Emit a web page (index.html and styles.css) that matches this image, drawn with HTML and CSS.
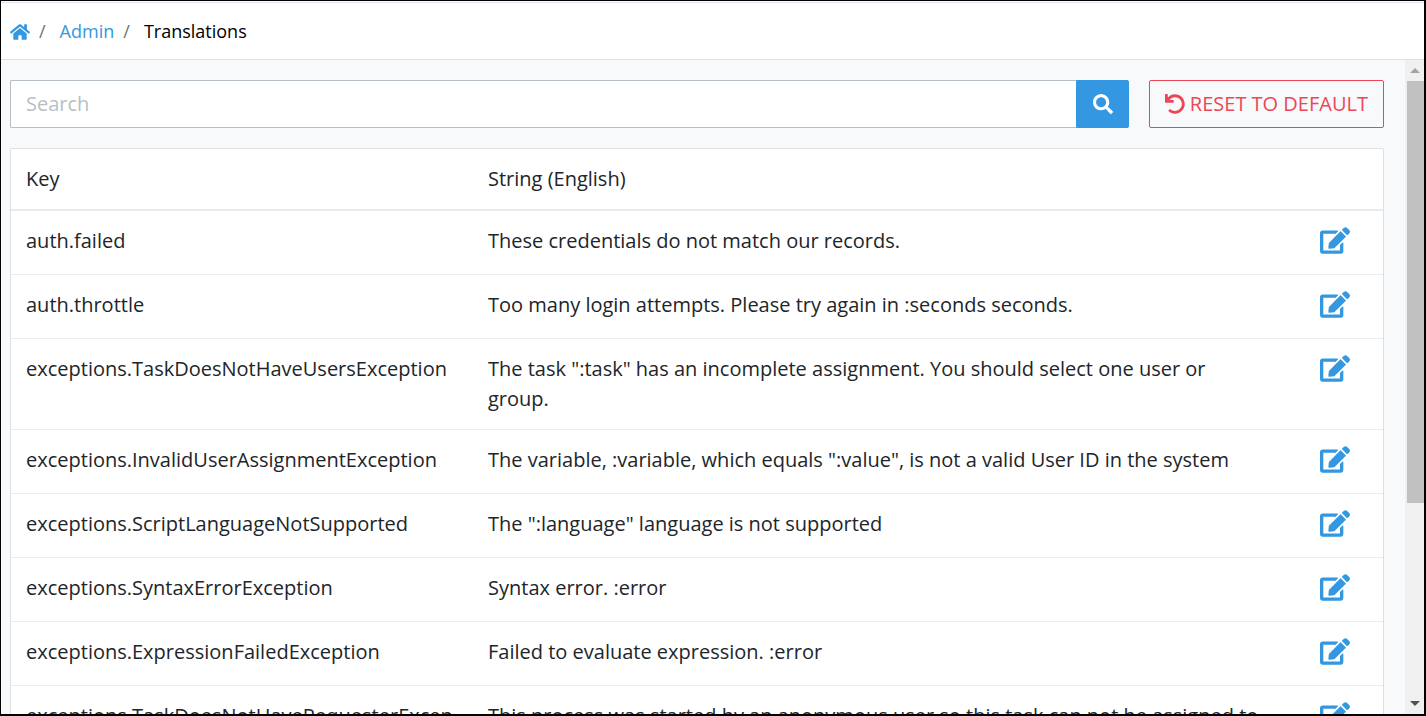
FILE: index.html
```html
<!DOCTYPE html>
<html lang="en">

<head>
    <meta charset="UTF-8">
    <meta name="viewport" content="width=device-width, initial-scale=1.0">
    <title>Translations</title>
    <link rel="stylesheet" href="styles.css">
</head>

<body>
    <!-- shared icons -->
    <svg class="sprite" aria-hidden="true">
        <symbol id="icon-home" viewBox="0 0 576 512">
            <path d="M280.37 148.26L96 300.11V464a16 16 0 0 0 16 16l112.06-.29a16 16 0 0 0 15.92-16V368a16 16 0 0 1 16-16h64a16 16 0 0 1 16 16v95.64a16 16 0 0 0 16 16.05L464 480a16 16 0 0 0 16-16V300L295.67 148.26a12.19 12.19 0 0 0-15.3 0zM571.6 251.47L488 182.56V44.05a12 12 0 0 0-12-12h-56a12 12 0 0 0-12 12v72.61L318.47 43a48 48 0 0 0-61 0L4.34 251.47a12 12 0 0 0-1.6 16.9l25.5 31A12 12 0 0 0 45.15 301l235.22-193.74a12.19 12.19 0 0 1 15.3 0L530.9 301a12 12 0 0 0 16.9-1.6l25.5-31a12 12 0 0 0-1.7-16.93z"/>
        </symbol>
        <symbol id="icon-search" viewBox="0 0 512 512">
            <path d="M505 442.7L405.3 343c-4.5-4.5-10.6-7-17-7H372c27.6-35.3 44-79.7 44-128C416 93.1 322.9 0 208 0S0 93.1 0 208s93.1 208 208 208c48.3 0 92.7-16.4 128-44v16.3c0 6.4 2.5 12.5 7 17l99.7 99.7c9.4 9.4 24.6 9.4 33.9 0l28.3-28.3c9.4-9.4 9.4-24.6.1-34zM208 336c-70.7 0-128-57.2-128-128 0-70.7 57.2-128 128-128 70.7 0 128 57.2 128 128 0 70.7-57.2 128-128 128z"/>
        </symbol>
        <symbol id="icon-undo" viewBox="0 0 512 512">
            <path d="M212.333 224.333H12c-6.627 0-12-5.373-12-12V12C0 5.373 5.373 0 12 0h48c6.627 0 12 5.373 12 12v78.112C117.773 39.279 184.26 7.47 258.175 8.007c136.906.994 246.448 111.623 246.157 248.532C504.041 393.258 393.12 504 256.333 504c-64.089 0-122.496-24.313-166.51-64.215-5.099-4.622-5.334-12.554-.467-17.42l33.967-33.967c4.474-4.474 11.662-4.717 16.401-.525C170.76 415.336 211.58 432 256.333 432c97.268 0 176-78.716 176-176 0-97.267-78.716-176-176-176-58.496 0-110.28 28.476-142.274 72.333h98.274c6.627 0 12 5.373 12 12v48c0 6.627-5.373 12-12 12z"/>
        </symbol>
        <symbol id="icon-edit" viewBox="0 0 576 512">
            <path d="M402.6 83.2l90.2 90.2c3.8 3.8 3.8 10 0 13.8L274.4 405.6l-92.8 10.3c-12.4 1.4-22.9-9.1-21.5-21.5l10.3-92.8L388.8 83.2c3.8-3.8 10-3.8 13.8 0zm162-22.9l-48.8-48.8c-15.2-15.2-39.9-15.2-55.2 0l-35.4 35.4c-3.8 3.8-3.8 10 0 13.8l90.2 90.2c3.8 3.8 10 3.8 13.8 0l35.4-35.4c15.2-15.3 15.2-40 0-55.2zM384 346.2V448H64V128h229.8c3.2 0 6.2-1.3 8.5-3.5l40-40c7.6-7.6 2-20.5-8.5-20.5H48C21.5 64 0 85.5 0 112v352c0 26.5 21.5 48 48 48h352c26.5 0 48-21.5 48-48V306.2c0-10.7-12.9-16-20.5-8.5l-40 40c-2.2 2.3-3.5 5.3-3.5 8.5z"/>
        </symbol>
    </svg>

    <div class="page">
        <nav class="topbar" aria-label="Breadcrumb">
            <ol class="breadcrumb">
                <li><a href="#" aria-label="Home"><svg class="icon-home"><use href="#icon-home"/></svg></a></li>
                <li><a href="#">Admin</a></li>
                <li class="active">Translations</li>
            </ol>
        </nav>

        <div class="main">
            <main class="content">
                <div class="toolbar">
                    <form class="search">
                        <input class="search-input" type="search" placeholder="Search" aria-label="Search">
                        <button class="search-button" type="button" aria-label="Search">
                            <svg class="icon"><use href="#icon-search"/></svg>
                        </button>
                    </form>
                    <button class="reset-button" type="button">
                        <svg class="icon"><use href="#icon-undo"/></svg>
                        Reset to Default
                    </button>
                </div>

                <div class="card">
                    <table class="translations">
                        <thead>
                            <tr>
                                <th class="col-key">Key</th>
                                <th>String (English)</th>
                                <th class="col-action"></th>
                            </tr>
                        </thead>
                        <tbody>
                            <tr>
                                <td>auth.failed</td>
                                <td>These credentials do not match our records.</td>
                                <td class="action"><button class="edit-button" type="button" aria-label="Edit"><svg class="icon-edit"><use href="#icon-edit"/></svg></button></td>
                            </tr>
                            <tr>
                                <td>auth.throttle</td>
                                <td>Too many login attempts. Please try again in :seconds seconds.</td>
                                <td class="action"><button class="edit-button" type="button" aria-label="Edit"><svg class="icon-edit"><use href="#icon-edit"/></svg></button></td>
                            </tr>
                            <tr>
                                <td>exceptions.TaskDoesNotHaveUsersException</td>
                                <td>The task ":task" has an incomplete assignment. You should select one user or group.</td>
                                <td class="action"><button class="edit-button" type="button" aria-label="Edit"><svg class="icon-edit"><use href="#icon-edit"/></svg></button></td>
                            </tr>
                            <tr>
                                <td>exceptions.InvalidUserAssignmentException</td>
                                <td>The variable, :variable, which equals ":value", is not a valid User ID in the system</td>
                                <td class="action"><button class="edit-button" type="button" aria-label="Edit"><svg class="icon-edit"><use href="#icon-edit"/></svg></button></td>
                            </tr>
                            <tr>
                                <td>exceptions.ScriptLanguageNotSupported</td>
                                <td>The ":language" language is not supported</td>
                                <td class="action"><button class="edit-button" type="button" aria-label="Edit"><svg class="icon-edit"><use href="#icon-edit"/></svg></button></td>
                            </tr>
                            <tr>
                                <td>exceptions.SyntaxErrorException</td>
                                <td>Syntax error. :error</td>
                                <td class="action"><button class="edit-button" type="button" aria-label="Edit"><svg class="icon-edit"><use href="#icon-edit"/></svg></button></td>
                            </tr>
                            <tr>
                                <td>exceptions.ExpressionFailedException</td>
                                <td>Failed to evaluate expression. :error</td>
                                <td class="action"><button class="edit-button" type="button" aria-label="Edit"><svg class="icon-edit"><use href="#icon-edit"/></svg></button></td>
                            </tr>
                            <tr>
                                <td>exceptions.TaskDoesNotHaveRequesterException</td>
                                <td>This process was started by an anonymous user so this task can not be assigned to the requester</td>
                                <td class="action"><button class="edit-button" type="button" aria-label="Edit"><svg class="icon-edit"><use href="#icon-edit"/></svg></button></td>
                            </tr>
                        </tbody>
                    </table>
                </div>
            </main>

            <div class="scrollbar" aria-hidden="true">
                <span class="arrow arrow-up"></span>
                <div class="track"><div class="thumb"></div></div>
                <span class="arrow arrow-down"></span>
            </div>
        </div>
    </div>
</body>

</html>
```
FILE: styles.css
```css
* {
    box-sizing: border-box;
}

body {
    margin: 0;
    font-family: 'Open Sans', sans-serif;
    font-size: 20px;
    line-height: 30px;
    color: #212529;
}

svg {
    display: block;
    fill: currentColor;
}

a {
    color: #3397e1;
    text-decoration: none;
}

button {
    font: inherit;
    cursor: pointer;
}

.sprite {
    display: none;
}

.page {
    display: flex;
    flex-direction: column;
    height: 100vh;
    overflow: hidden;
    border: solid #000;
    border-width: 1px 2px 2px 1px;
    background-color: #f7f9fb;
}

/* Breadcrumb bar */
.topbar {
    flex: none;
    padding: 15px 9px 13px;
    background-color: #fff;
    border-top: 1px solid #fff;
    border-bottom: 1px solid #dee2e6;
    box-shadow: inset 0 1px #e4e1ec;
}

.breadcrumb {
    display: flex;
    align-items: center;
    margin: 0;
    padding: 0;
    list-style: none;
    font-size: 18px;
    line-height: 29px;
}

.breadcrumb li {
    display: flex;
    align-items: center;
}

.breadcrumb li + li::before {
    content: "/";
    padding: 0 14px 0 9px;
    color: #6c757d;
}

.breadcrumb .active {
    color: #000;
}

.icon-home {
    width: 20px;
    height: 18px;
}

.icon {
    width: 20px;
    height: 20px;
}

.main {
    display: flex;
    flex: 1;
    min-height: 0;
}

.content {
    flex: 1;
    min-width: 0;
    overflow: hidden;
    padding: 20px 21px 0 9px;
}

/* Search and reset */
.toolbar {
    display: flex;
    gap: 20px;
    margin-bottom: 20px;
}

.search {
    display: flex;
    flex: 1;
}

.search-input {
    flex: 1;
    min-width: 0;
    height: 48px;
    padding: 0 15px 2px;
    border: 1px solid #b6bfc6;
    border-right: none;
    border-radius: 2px 0 0 2px;
    background-color: #fff;
    font: inherit;
    appearance: none;
}

.search-input::placeholder {
    color: #b6bfc6;
}

.search-button {
    padding: 0 16px;
    width: 53px;
    border: 1px solid #3397e1;
    border-radius: 0 2px 2px 0;
    background-color: #3397e1;
    color: #fff;
}

.reset-button {
    display: flex;
    align-items: center;
    gap: 5px;
    padding: 0 15px;
    border: 1px solid #ed4757;
    border-radius: 2px;
    background-color: transparent;
    color: #ed4757;
    text-transform: uppercase;
}

/* Translations table */
.card {
    background-color: #fff;
    border: 1px solid #dee0e2;
    border-radius: 2px;
}

.translations {
    width: 100%;
    table-layout: fixed;
    border-collapse: separate;
    border-spacing: 0;
}

.translations th,
.translations td {
    padding: 15px;
    text-align: left;
    vertical-align: top;
    font-weight: 400;
    overflow-wrap: break-word;
}

.translations th {
    border-bottom: 2px solid #e9ecef;
}

.translations td {
    border-bottom: 1px solid #e9ecef;
}

.translations .col-key {
    width: 462px;
}

.translations .col-action {
    width: 106px;
}

.translations .action {
    padding: 15px 15px 15px 0;
}

.edit-button {
    display: block;
    margin-left: auto;
    padding: 1px 18px 5px;
    border: none;
    background: none;
    color: #3397e1;
}

.icon-edit {
    width: 30px;
    height: 27px;
}

/* Scrollbar */
.scrollbar {
    display: flex;
    flex-direction: column;
    width: 19px;
    background-color: #f0f0f0;
}

.arrow {
    height: 21px;
    display: flex;
    align-items: center;
    justify-content: center;
}

.arrow::before {
    content: "";
    border: 5px solid transparent;
}

.arrow-up::before {
    border-top: none;
    border-bottom-color: #a3a3a3;
}

.arrow-down::before {
    border-bottom: none;
    border-top-color: #505050;
}

.track {
    flex: 1;
    padding-left: 2px;
}

.thumb {
    height: 69%;
    background-color: #c1c1c1;
}
```
